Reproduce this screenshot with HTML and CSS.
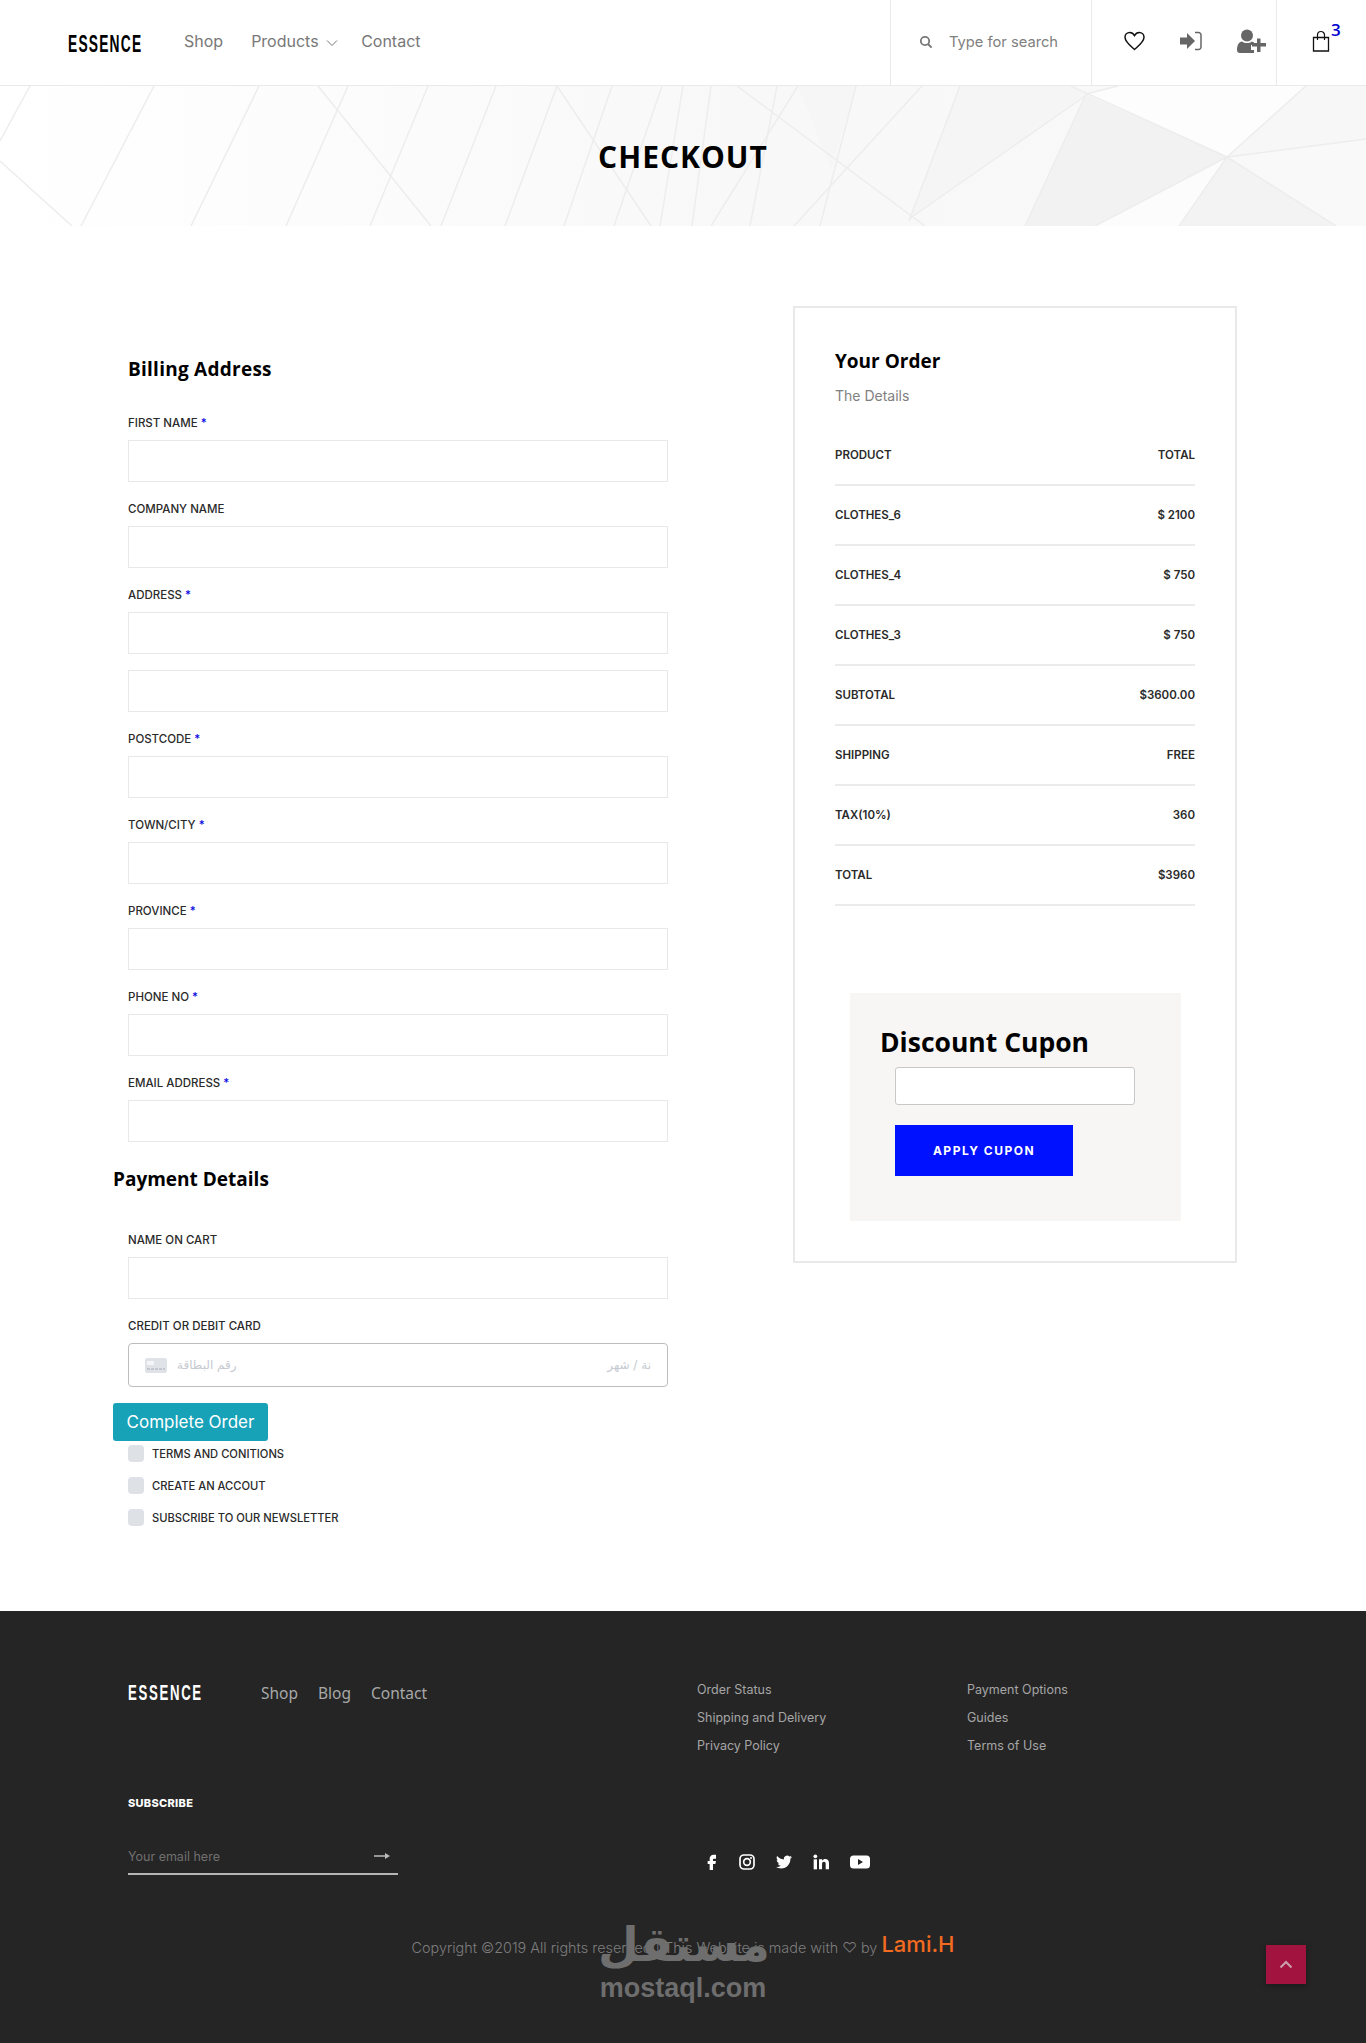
FILE: index.html
```html
<!DOCTYPE html>
<html>
  <head>
    <meta charset="UTF-8">
    <title>Essence - Checkout</title>
    <link rel="stylesheet" href="styles.css">
  </head>
  <body>
    <div id="header">
      <a href="#" class="logo">ESSENCE</a>
      <div class="nav">
        <a href="#">Shop</a>
        <a href="#" class="has-arrow">Products
          <svg width="12" height="8" viewBox="0 0 12 8"><path d="M1 1.500l5 5 5-5" fill="none" stroke="#777" stroke-width="1"/></svg>
        </a>
        <a href="#">Contact</a>
      </div>
      <div class="search">
        <svg width="14" height="14" viewBox="0 0 14 14"><circle cx="6" cy="6" r="4.200" fill="none" stroke="#777" stroke-width="1.800"/><path d="M9 9l3.600 3.600" stroke="#777" stroke-width="2"/></svg>
        <input type="text" placeholder="Type for search">
      </div>
      <div class="icons">
        <svg class="heart" width="21" height="20" viewBox="0 0 21 20"><path d="M10.500 18.500C6 14.500 1 10.800 1 6.300 1 3.400 3.200 1.500 5.700 1.500c2 0 3.700 1.100 4.800 3 1.100-1.900 2.800-3 4.800-3 2.500 0 4.700 1.900 4.700 4.800 0 4.500-5 8.200-9.500 12.200z" fill="none" stroke="#111" stroke-width="1.500"/></svg>
        <svg class="login" width="22" height="20" viewBox="0 0 22 20"><path d="M0 6.500h7V2l8 8-8 8v-4.500H0z" fill="#666"/><path d="M15 1.500h3.500a2.500 2.500 0 012.500 2.500v12a2.500 2.500 0 01-2.500 2.500H15" fill="none" stroke="#666" stroke-width="1.500"/></svg>
        <svg class="user" width="29" height="24" viewBox="0 0 29 24"><circle cx="10" cy="6.500" r="6" fill="#666"/><path d="M0 21c0-5 2-8 5-8.500 3 2 7 2 10 0 .8.200 1.500.500 2 1v2.500h-3v5h3V24H3c-2 0-3-1-3-3z" fill="#666"/><path d="M20 9.500h3.500v4.500H29v3.500h-5.500V23H20v-5.500h-5V14h5z" fill="#666"/></svg>
      </div>
      <div class="cart">
        <svg width="18" height="22" viewBox="0 0 18 22"><path d="M1.500 7.500h15V21h-15z" fill="none" stroke="#111" stroke-width="1.300"/><path d="M5.500 10V5a3.500 3.500 0 017 0v5" fill="none" stroke="#111" stroke-width="1.200"/></svg>
        <span class="count">3</span>
      </div>
    </div>

    <div id="hero">
      <svg class="hero-bg" viewBox="0 0 1366 140" preserveAspectRatio="none">
        <defs>
          <linearGradient id="fade" x1="0" y1="0" x2="1" y2="0">
            <stop offset="0" stop-color="#fff"/>
            <stop offset="0.55" stop-color="#f8f8f8"/>
            <stop offset="1" stop-color="#f9f9f9"/>
          </linearGradient>
        </defs>
        <rect width="1366" height="140" fill="url(#fade)"/>
        <polygon points="1086,8 1227,71 1095,140 1025,140" fill="#f2f2f2"/>
        <polygon points="960,0 1071,0 1086,8 909,133" fill="#f5f5f5"/>
        <polygon points="856,0 798,0 831,83" fill="#f6f6f6"/>
        <polygon points="1118,0 1306,0 1227,71 1086,8" fill="#fdfdfd"/>
        <polygon points="1227,71 1179,140 1336,140" fill="#f3f3f3"/>
        <polygon points="1095,140 1227,71 1179,140" fill="#fcfcfc"/>
        <polygon points="1306,0 1366,0 1366,53 1227,71" fill="#f7f7f7"/>
        <g stroke="#ededed" stroke-width="1.500" fill="none">
          <path d="M30 0L0 55M154 0L81 140M259 0L191 140M348 0L286 140M428 0L370 140M496 0L441 140M557 0L505 140"/>
          <path d="M612 0L564 140M662 0L614 140M683 0L660 140M711 0L692 140M777 0L750 140M798 0L711 140M856 0L820 140"/>
          <path d="M0 75L72 140M318 0L431 140M557 0L651 140M737 0L925 140M922 0L794 140M960 0L909 135"/>
          <path d="M1071 0L1227 71L1336 140M1088 8L909 133M1086 8L1025 140M1118 0L1086 8M1306 0L1227 71M1366 53L1227 71M1227 71L1095 140M1227 71L1179 140"/>
        </g>
      </svg>
      <h1>CHECKOUT</h1>
    </div>

    <div id="main">
      <form class="billing">
        <h2>Billing Address</h2>
        <div class="field"><label>First Name <span class="req">*</span></label><input type="text"></div>
        <div class="field"><label>Company Name</label><input type="text"></div>
        <div class="field"><label>Address <span class="req">*</span></label><input type="text"><input type="text" class="second"></div>
        <div class="field"><label>Postcode <span class="req">*</span></label><input type="text"></div>
        <div class="field"><label>Town/City <span class="req">*</span></label><input type="text"></div>
        <div class="field"><label>Province <span class="req">*</span></label><input type="text"></div>
        <div class="field"><label>Phone No <span class="req">*</span></label><input type="text"></div>
        <div class="field"><label>Email Address <span class="req">*</span></label><input type="text"></div>

        <h2 class="payment">Payment Details</h2>
        <div class="field"><label>Name on Cart</label><input type="text"></div>
        <div class="field card-field">
          <label>Credit or Debit Card</label>
          <div class="card-input">
            <svg width="22" height="15" viewBox="0 0 22 15"><rect width="22" height="15" rx="2" fill="#dfe3e8"/><rect x="2" y="3" width="7" height="4" fill="#f4f5f7"/><path d="M2 11h18" stroke="#b9bfc8" stroke-width="1.500" stroke-dasharray="3 1"/></svg>
            <span class="card-num">رقم البطاقة</span>
            <span class="card-date">نة / شهر</span>
          </div>
        </div>
        <button type="button" class="complete">Complete Order</button>
        <label class="check"><span class="box"></span>Terms and Conitions</label>
        <label class="check"><span class="box"></span>Create an Accout</label>
        <label class="check"><span class="box"></span>Subscribe to our Newsletter</label>
      </form>

      <div class="order">
        <h3>Your Order</h3>
        <p class="sub">The Details</p>
        <div class="row"><span>Product</span><span>Total</span></div>
        <div class="row"><span>Clothes_6</span><span>$ 2100</span></div>
        <div class="row"><span>Clothes_4</span><span>$ 750</span></div>
        <div class="row"><span>Clothes_3</span><span>$ 750</span></div>
        <div class="row"><span>Subtotal</span><span>$3600.00</span></div>
        <div class="row"><span>Shipping</span><span>Free</span></div>
        <div class="row"><span>Tax(10%)</span><span>360</span></div>
        <div class="row"><span>Total</span><span>$3960</span></div>

        <div class="discount">
          <h2>Discount Cupon</h2>
          <input type="text">
          <button type="button">Apply Cupon</button>
        </div>
      </div>
    </div>

    <div id="footer">
      <div class="foot-top">
        <div class="foot-left">
          <a href="#" class="logo">ESSENCE</a>
          <div class="foot-nav">
            <a href="#">Shop</a>
            <a href="#">Blog</a>
            <a href="#">Contact</a>
          </div>
        </div>
        <ul class="foot-links">
          <li><a href="#">Order Status</a></li>
          <li><a href="#">Shipping and Delivery</a></li>
          <li><a href="#">Privacy Policy</a></li>
        </ul>
        <ul class="foot-links">
          <li><a href="#">Payment Options</a></li>
          <li><a href="#">Guides</a></li>
          <li><a href="#">Terms of Use</a></li>
        </ul>
      </div>

      <div class="foot-mid">
        <div class="subscribe">
          <p class="sub-title">SUBSCRIBE</p>
          <div class="sub-input">
            <input type="text" placeholder="Your email here">
            <svg width="16" height="8" viewBox="0 0 16 8"><path d="M0 4h13" stroke="#bbb" stroke-width="1.500"/><path d="M11 1l5 3-5 3z" fill="#bbb"/></svg>
          </div>
        </div>
        <div class="social">
          <svg class="fb" width="16" height="16" viewBox="0 0 24 24"><path d="M14.500 7h3.500V1h-3.500C10.500 1 8.500 3.500 8.500 7v3.500H5.500V15h3v9h5v-9H17l1-4.500h-4.500V8c0-.6.400-1 1-1z" fill="#fff"/></svg>
          <svg width="16" height="16" viewBox="0 0 24 24"><rect x="1.500" y="1.500" width="21" height="21" rx="6" fill="none" stroke="#fff" stroke-width="2.500"/><circle cx="12" cy="12" r="5" fill="none" stroke="#fff" stroke-width="2.500"/><circle cx="18" cy="6" r="1.500" fill="#fff"/></svg>
          <svg width="16" height="16" viewBox="0 0 24 24"><path d="M23.953 4.570a10 10 0 01-2.825.775 4.958 4.958 0 002.163-2.723c-.951.555-2.005.959-3.127 1.184a4.920 4.920 0 00-8.384 4.482C7.690 8.095 4.067 6.130 1.640 3.162a4.822 4.822 0 00-.666 2.475c0 1.710.870 3.213 2.188 4.096a4.904 4.904 0 01-2.228-.616v.060a4.923 4.923 0 003.946 4.827 4.996 4.996 0 01-2.212.085 4.936 4.936 0 004.604 3.417 9.867 9.867 0 01-6.102 2.105c-.390 0-.779-.023-1.170-.067a13.995 13.995 0 007.557 2.209c9.053 0 13.998-7.496 13.998-13.985 0-.210 0-.420-.015-.630A9.935 9.935 0 0024 4.590z" fill="#fff"/></svg>
          <svg width="16" height="16" viewBox="0 0 24 24"><rect x="1" y="8" width="5" height="15" fill="#fff"/><circle cx="3.500" cy="3.500" r="2.800" fill="#fff"/><path d="M9 8h4.800v2.200c1-1.600 2.700-2.600 4.700-2.600 3.800 0 5.500 2.400 5.500 6.400V23h-5v-8c0-2-.8-3.200-2.500-3.200-1.800 0-2.900 1.300-2.900 3.200v8H9z" fill="#fff"/></svg>
          <svg width="20" height="16" viewBox="0 0 20 16"><rect y="1.500" width="20" height="13" rx="3.500" fill="#fff"/><path d="M8 5l5 3-5 3z" fill="#252525"/></svg>
        </div>
      </div>

      <p class="copy">Copyright &copy;2019 All rights reserved | This Website is made with &#9825; by <a href="#">Lami.H</a></p>

      <div class="watermark">
        <span class="wm-ar">مستقل</span>
        <span class="wm-en">mostaql.com</span>
      </div>
      <a href="#" class="to-top">
        <svg width="14" height="9" viewBox="0 0 14 9"><path d="M1.500 7.500L7 2l5.500 5.500" fill="none" stroke="#c9a0ad" stroke-width="2"/></svg>
      </a>
    </div>
  </body>
</html>
```

FILE: styles.css
```css
* {
  box-sizing: border-box;
}
body {
  margin: 0;
  background: #fff;
  color: #222;
  font-family: 'Inter', 'Noto Sans', sans-serif;
}
a {
  text-decoration: none;
  color: inherit;
}
input {
  display: block;
  outline: none;
  font-family: inherit;
}

/* header */
#header {
  display: flex;
  align-items: stretch;
  height: 86px;
  border-bottom: 1px solid #eaeaea;
}
#header .logo {
  margin-left: 68px;
  width: 116px;
  line-height: 88px;
  color: #000;
}
.logo {
  display: inline-block;
  font-family: 'Liberation Sans', sans-serif;
  font-weight: bold;
  font-size: 23px;
  letter-spacing: 2px;
  transform: scaleX(.6);
  transform-origin: left center;
}
.nav {
  display: flex;
  align-items: center;
  gap: 28px;
  flex: 1;
  font-size: 16px;
  color: #787878;
  padding-bottom: 3px;
}
.nav svg {
  margin-left: 3px;
}
.has-arrow {
  margin-right: -5px;
}
.search {
  display: flex;
  align-items: center;
  width: 201px;
  padding: 0 0 2px 28px;
  border-left: 1px solid #eaeaea;
}
.search input {
  width: 140px;
  margin-left: 16px;
  border: 0;
  padding: 0;
  font-size: 14.700px;
  color: #777;
}
.search input::placeholder {
  color: #808080;
}
.icons {
  display: flex;
  align-items: center;
  width: 185px;
  padding: 0 0 4px 32px;
  gap: 35px;
  border-left: 1px solid #eaeaea;
}
.cart {
  position: relative;
  display: flex;
  align-items: center;
  width: 90px;
  padding: 0 0 4px 35px;
  border-left: 1px solid #eaeaea;
}
.count {
  position: absolute;
  top: 20px;
  left: 54px;
  font-family: 'Open Sans', sans-serif;
  font-weight: 600;
  font-size: 17px;
  line-height: 20px;
  color: #0000d0;
}

/* page title */
#hero {
  position: relative;
  height: 140px;
  display: flex;
  align-items: center;
  justify-content: center;
}
.hero-bg {
  position: absolute;
  top: 0;
  left: 0;
  width: 100%;
  height: 100%;
}
#hero h1 {
  position: relative;
  margin: 0;
  font-family: 'Open Sans', sans-serif;
  font-size: 30px;
  font-weight: 700;
  letter-spacing: 1px;
  color: #000;
}

/* main columns */
#main {
  display: flex;
  align-items: flex-start;
  height: 1385px;
  padding: 80px 0 0 113px;
}
.billing {
  width: 555px;
  margin: 51px 125px 0 0;
  padding-left: 15px;
}
h2, h3 {
  margin: 0;
  font-family: 'Open Sans', sans-serif;
  font-weight: 700;
  color: #000;
}
.billing h2 {
  font-size: 19px;
  line-height: 24px;
  letter-spacing: .25px;
  margin-bottom: 33px;
}
.billing h2.payment {
  letter-spacing: 0;
  margin: 25px 0 40px -15px;
}
.field {
  margin-bottom: 18px;
}
.field label {
  display: block;
  height: 18px;
  margin-bottom: 8px;
  font-size: 11.500px;
  font-weight: 500;
  line-height: 18px;
  text-transform: uppercase;
  color: #2a2a2a;
}
.req {
  color: #0000e0;
}
.field input {
  width: 100%;
  height: 42px;
  background: #fff;
  border: 1px solid #e8e8e8;
}
.field input.second {
  margin-top: 16px;
}
.card-field {
  margin-bottom: 16px;
}
.card-input {
  display: flex;
  align-items: center;
  gap: 10px;
  height: 44px;
  padding: 0 16px;
  border: 1px solid #bdbdbd;
  border-radius: 4px;
  font-family: 'DejaVu Sans', sans-serif;
  font-size: 12px;
  color: #c6cad1;
}
.card-date {
  margin-left: auto;
}
.complete {
  display: block;
  width: 155px;
  height: 38px;
  margin: 0 0 4px -15px;
  padding: 0;
  border: 0;
  border-radius: 3px;
  background: #17a2b8;
  color: #fff;
  font-family: inherit;
  font-size: 17px;
}
.check {
  display: flex;
  align-items: center;
  gap: 8px;
  height: 17px;
  margin-bottom: 15px;
  font-size: 11.200px;
  font-weight: 500;
  text-transform: uppercase;
  color: #2a2a2a;
}
.box {
  width: 16px;
  height: 17px;
  background: #dee2e6;
  border-radius: 4px;
}

/* order box */
.order {
  width: 444px;
  height: 957px;
  padding: 41px 40px 0;
  border: 2px solid #e9e9e9;
}
.order h3 {
  font-size: 19px;
  line-height: 24px;
}
.sub {
  margin: 13px 0 20px;
  font-size: 14px;
  line-height: 20px;
  color: #808080;
}
.row {
  display: flex;
  justify-content: space-between;
  align-items: center;
  height: 60px;
  border-bottom: 2px solid #ebebeb;
  font-size: 11.500px;
  font-weight: 600;
  text-transform: uppercase;
  color: #2a2a2a;
}
.discount {
  width: 331px;
  height: 228px;
  margin: 87px 0 0 15px;
  padding: 32px 0 0 45px;
  background: #f8f5f5;
}
.discount h2 {
  margin: 0 0 8px -15px;
  font-size: 26.500px;
  line-height: 34px;
  white-space: nowrap;
}
.discount input {
  width: 240px;
  height: 38px;
  background: #fff;
  border: 1px solid #c8c8c8;
  border-radius: 3px;
}
.discount button {
  display: block;
  width: 178px;
  height: 51px;
  margin-top: 20px;
  border: 0;
  background: #0011ff;
  color: #fff;
  font-family: inherit;
  font-size: 12px;
  font-weight: 700;
  letter-spacing: 1.500px;
  text-transform: uppercase;
}

/* footer */
#footer {
  position: relative;
  height: 432px;
  padding: 65px 0 0 128px;
  background: #252525;
  color: #aaa;
}
.foot-top {
  display: flex;
  height: 119px;
}
.foot-left {
  display: flex;
  width: 569px;
  height: 34px;
  align-items: center;
}
.foot-left .logo {
  width: 133px;
  color: #fff;
  font-size: 22px;
  letter-spacing: 2.800px;
}
.foot-nav {
  display: flex;
  gap: 20px;
  font-family: 'Noto Sans', sans-serif;
  font-size: 15.500px;
  color: #a8a8a8;
}
.foot-links {
  width: 270px;
  margin: 0;
  padding: 0;
  list-style: none;
  font-size: 12.500px;
  line-height: 28px;
  color: #a6a6a6;
}
.foot-mid {
  display: flex;
}
.subscribe {
  width: 270px;
  margin-right: 299px;
}
.sub-title {
  margin: 0;
  font-size: 11px;
  font-weight: 800;
  line-height: 16px;
  letter-spacing: .3px;
  color: #fff;
}
.sub-input {
  display: flex;
  align-items: center;
  justify-content: space-between;
  height: 64px;
  padding: 28px 8px 0 0;
  border-bottom: 2px solid #b5b5b5;
}
.sub-input input {
  width: 200px;
  padding: 0;
  border: 0;
  background: transparent;
  font-size: 12.500px;
  color: #777;
}
.sub-input input::placeholder {
  color: #707070;
}
.social {
  display: flex;
  align-items: center;
  gap: 21px;
  height: 16px;
  margin-top: 59px;
  padding-left: 7px;
}
.social .fb {
  margin-right: -2px;
}
.copy {
  margin: 57px 0 0 -128px;
  font-size: 14.400px;
  font-weight: 300;
  line-height: 24px;
  text-align: center;
  color: #7d7d7d;
}
.copy a {
  font-size: 22px;
  font-weight: 500;
  vertical-align: 1px;
  color: #f26b21;
}
.watermark {
  position: absolute;
  top: 305px;
  left: 598px;
  width: 170px;
  text-align: center;
  color: #6e6e6e;
  pointer-events: none;
}
.wm-ar {
  display: block;
  font-family: 'DejaVu Sans', sans-serif;
  font-weight: bold;
  font-size: 47px;
  line-height: 58px;
}
.wm-en {
  display: block;
  font-family: 'Liberation Sans', sans-serif;
  font-weight: bold;
  font-size: 27px;
  line-height: 28px;
}
.to-top {
  position: absolute;
  top: 334px;
  left: 1266px;
  display: flex;
  align-items: center;
  justify-content: center;
  width: 40px;
  height: 39px;
  background: #a3133f;
  box-shadow: 0 2px 6px rgba(0, 0, 0, .3);
}
```
